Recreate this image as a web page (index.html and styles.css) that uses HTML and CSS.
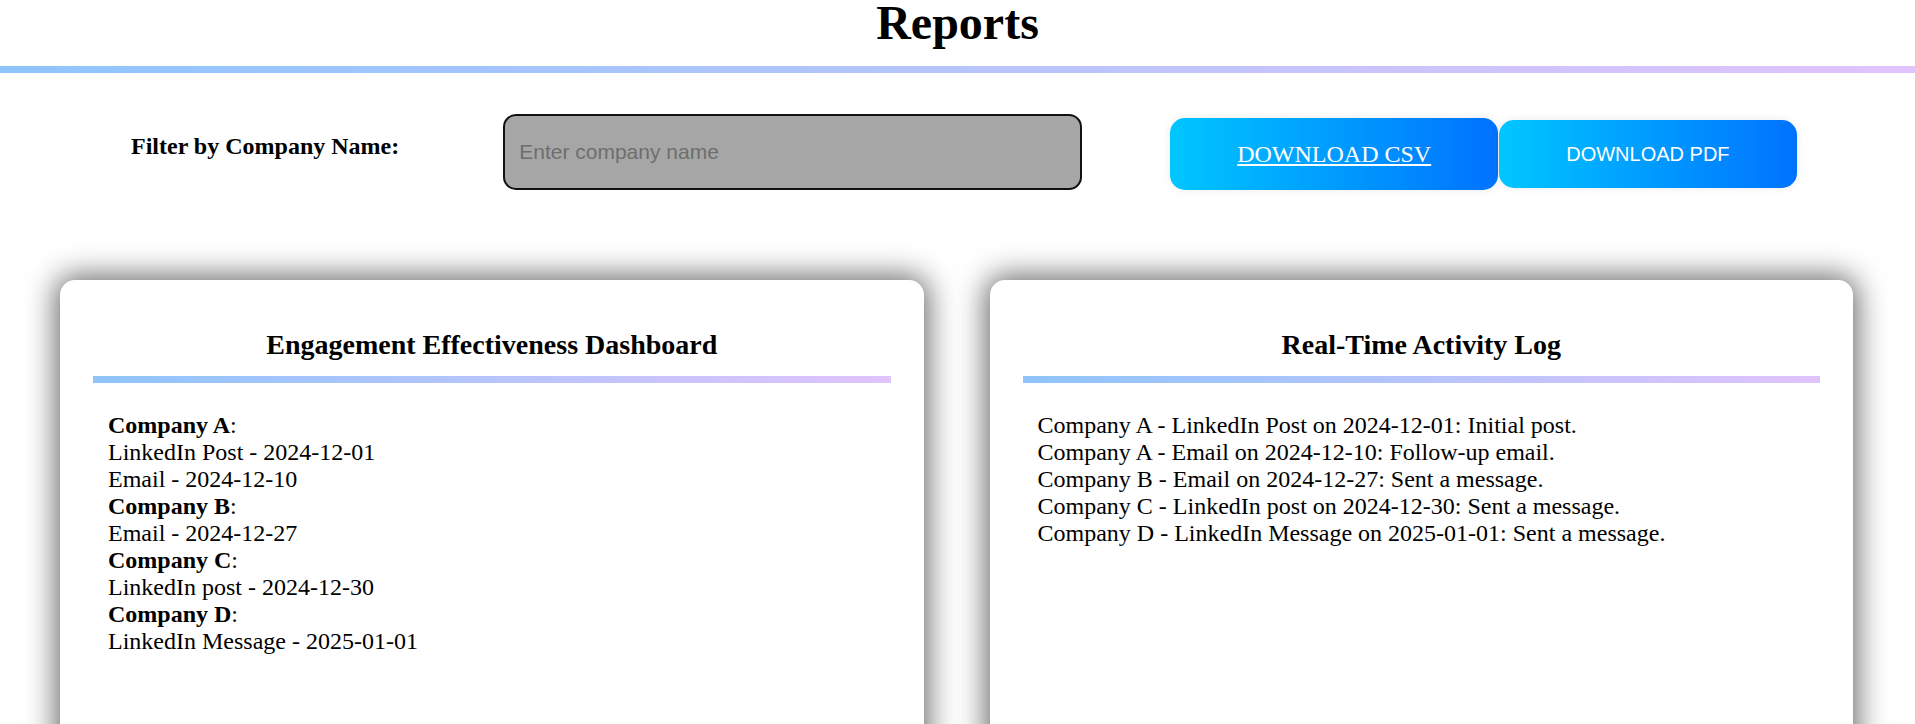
FILE: index.html
```html
<!DOCTYPE html>
<html lang="en">
<head>
<meta charset="utf-8">
<title>Reports</title>
<link rel="stylesheet" href="styles.css">
</head>
<body>
<header class="page-header">
  <h1 class="page-title">Reports</h1>
  <div class="gradient-rule"></div>
</header>

<section class="toolbar">
  <label class="filter-label" for="company">Filter by Company Name:</label>
  <input id="company" class="filter-input" type="text" placeholder="Enter company name">
  <div class="actions">
    <a href="#" class="btn btn-csv">DOWNLOAD CSV</a>
    <button class="btn btn-pdf" type="button">DOWNLOAD PDF</button>
  </div>
</section>

<main class="cards">
  <section class="card">
    <h3 class="card-title">Engagement Effectiveness Dashboard</h3>
    <div class="gradient-rule card-rule"></div>
    <div class="card-body">
      <div><strong>Company A</strong>:</div>
      <div>LinkedIn Post - 2024-12-01</div>
      <div>Email - 2024-12-10</div>
      <div><strong>Company B</strong>:</div>
      <div>Email - 2024-12-27</div>
      <div><strong>Company C</strong>:</div>
      <div>LinkedIn post - 2024-12-30</div>
      <div><strong>Company D</strong>:</div>
      <div>LinkedIn Message - 2025-01-01</div>
    </div>
  </section>
  <section class="card">
    <h3 class="card-title">Real-Time Activity Log</h3>
    <div class="gradient-rule card-rule"></div>
    <div class="card-body">
      <div>Company A - LinkedIn Post on 2024-12-01: Initial post.</div>
      <div>Company A - Email on 2024-12-10: Follow-up email.</div>
      <div>Company B - Email on 2024-12-27: Sent a message.</div>
      <div>Company C - LinkedIn post on 2024-12-30: Sent a message.</div>
      <div>Company D - LinkedIn Message on 2025-01-01: Sent a message.</div>
    </div>
  </section>
</main>
</body>
</html>
```

FILE: styles.css
```css
html, body {
  margin: 0;
  padding: 0;
  background: #ffffff;
}

body {
  font-family: "Liberation Serif", "Times New Roman", serif;
  font-size: 24px;
  color: #000;
}

.page-header {
  text-align: center;
}

.page-title {
  margin: 0;
  font-size: 48px;
  line-height: 46px;
  padding-bottom: 20px;
  font-weight: bold;
}

.gradient-rule {
  height: 7px;
  background: linear-gradient(to right, #8ec5fc, #e0c3fc);
}

.toolbar {
  display: flex;
  align-items: flex-start;
  padding: 41px 0 0 131px;
}

.filter-label {
  font-weight: bold;
  margin-top: 19px;
}

.filter-input {
  box-sizing: border-box;
  width: 579px;
  height: 76px;
  margin: 0 0 0 104px;
  padding: 0 14px;
  border: 2px solid #111;
  border-radius: 13px;
  background: #a6a6a6;
  font-family: "Liberation Sans", Arial, sans-serif;
  font-size: 21px;
  color: #000;
  outline: none;
}

.filter-input::placeholder {
  color: #6e6e6e;
}

.actions {
  display: flex;
  align-items: center;
  margin: 4px 0 0 88px;
}

.btn {
  display: inline-block;
  color: #fff;
  border: none;
  border-radius: 15px;
  background: linear-gradient(to right, #00c6ff, #0072ff);
  box-shadow: 0 0 10px rgba(0, 0, 0, 0.08);
  cursor: pointer;
}

.btn-csv {
  padding: 22.7px 67px;
  font-family: "Liberation Serif", "Times New Roman", serif;
  font-size: 24px;
  text-decoration: underline;
}

.btn-pdf {
  margin-left: 1px;
  padding: 22.5px 67px;
  font-family: "Liberation Sans", Arial, sans-serif;
  font-size: 20px;
  line-height: normal;
}

.cards {
  display: grid;
  grid-template-columns: 1fr 1fr;
  gap: 66px;
  padding: 90px 62px 0 60px;
}

.card {
  background: #fff;
  border-radius: 15px;
  padding: 0 33px;
  min-height: 520px;
  box-shadow: 0 0 30px 4px rgba(0, 0, 0, 0.6);
}

.card-title {
  margin: 49px 0 15px;
  font-size: 28px;
  text-align: center;
  font-weight: bold;
}

.card-rule {
  margin-bottom: 29px;
}

.card-body {
  padding-left: 15px;
}
```
